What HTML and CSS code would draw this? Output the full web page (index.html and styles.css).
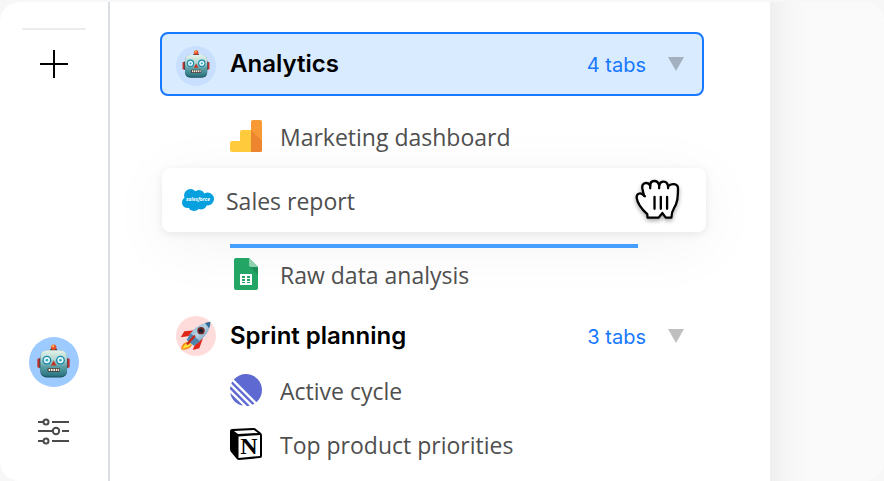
FILE: index.html
```
<!DOCTYPE html>
<html lang="en">
<head>
<meta charset="utf-8">
<title>Analytics</title>
<link rel="stylesheet" href="styles.css">
</head>
<body>
<svg class="defs" aria-hidden="true">
  <defs>
    <linearGradient id="face" x1="0" y1="0" x2="0" y2="1">
      <stop offset="0" stop-color="#e4f3e9"/>
      <stop offset=".35" stop-color="#b2d6d0"/>
      <stop offset=".6" stop-color="#5fa3a8"/>
      <stop offset="1" stop-color="#26717f"/>
    </linearGradient>
    <linearGradient id="hull" x1="0" y1="0" x2="1" y2="1">
      <stop offset="0" stop-color="#5aa0cc"/>
      <stop offset=".5" stop-color="#b9d3e2"/>
      <stop offset="1" stop-color="#3b719c"/>
    </linearGradient>
    <symbol id="robot" viewBox="0 0 97 99">
      <rect x="1" y="42" width="13" height="27" rx="3" fill="#c5302c"/>
      <rect x="83" y="42" width="13" height="27" rx="3" fill="#c5302c"/>
      <rect x="7" y="40" width="5" height="31" rx="2" fill="#2f4c55"/>
      <rect x="85" y="40" width="5" height="31" rx="2" fill="#2f4c55"/>
      <rect x="39" y="13" width="20" height="8" rx="3" fill="#533a34"/>
      <circle cx="49" cy="9" r="8" fill="#e5492b"/>
      <circle cx="47" cy="6" r="4" fill="#ffad48"/>
      <rect x="10" y="19" width="78" height="79" rx="18" fill="#1c505b"/>
      <rect x="10" y="18" width="78" height="77" rx="18" fill="url(#face)"/>
      <circle cx="29" cy="47" r="13" fill="#1687ab"/>
      <circle cx="69" cy="47" r="13" fill="#1687ab"/>
      <circle cx="29" cy="47" r="9" fill="#e9fcff"/>
      <circle cx="69" cy="47" r="9" fill="#e9fcff"/>
      <circle cx="29" cy="47" r="4" fill="#37aacb"/>
      <circle cx="69" cy="47" r="4" fill="#37aacb"/>
      <path d="M49 48 57 63H41Z" fill="#c5301f"/>
      <rect x="31" y="70" width="36" height="11" rx="3" fill="#3d3430"/>
      <path d="M34 75.500H65" stroke="#f7efdc" stroke-width="7" stroke-dasharray="5 2"/>
    </symbol>
  </defs>
</svg>
<div class="window">
  <nav class="sidebar" aria-label="Spaces">
    <div class="divider"></div>
    <button class="icon-button add" aria-label="Add">
      <svg width="28" height="28" viewBox="0 0 28 28"><path d="M14 0V28M0 14H28" stroke="#000" stroke-width="2"/></svg>
    </button>
    <button class="icon-button space" aria-label="Robot space"><svg class="robot-large"><use href="#robot"/></svg></button>
    <button class="icon-button" aria-label="Settings">
      <svg width="32" height="28" viewBox="0 0 32 28" fill="none" stroke="#4b4b4b" stroke-width="2">
        <path d="M0 5H5M14 5H31M0 14H14M24 14H31M0 24H5M14 24H31"/>
        <circle cx="8" cy="5" r="2.500"/><circle cx="18" cy="14" r="3.200"/><circle cx="8" cy="24" r="2.500"/>
      </svg>
    </button>
  </nav>
  <main class="panel">
    <button class="group group-active">
      <span class="badge badge-blue"><svg class="robot-small"><use href="#robot"/></svg></span>
      <span class="group-name">Analytics</span>
      <span class="count">4 tabs</span>
      <svg class="caret" viewBox="0 0 16 14"><path d="M0 0H16L8 14Z"/></svg>
    </button>
    <ul class="tabs">
      <li><a class="tab" href="#marketing">
        <svg class="tab-icon" viewBox="0 0 32 32">
          <path d="M2 21H10V12Q10 10 12 10H21V32H2Q0 32 0 30V23Q0 21 2 21Z" fill="#ffcb3d"/>
          <path d="M23 0H30Q32 0 32 2V30Q32 32 30 32H21V2Q21 0 23 0Z" fill="#f79a36"/>
          <path d="M21 10 32 21V30Q32 32 30 32H21Z" fill="#ec8430"/>
        </svg>
        <span class="tab-name">Marketing dashboard</span></a></li>
      <li><a class="tab dragged" href="#sales">
        <svg class="tab-icon" viewBox="0 0 32 32">
          <g fill="#06a0df"><circle cx="8.500" cy="11.500" r="6.500"/><circle cx="17" cy="11.500" r="5.500"/><circle cx="25.500" cy="15" r="6.500"/><circle cx="5.500" cy="18.500" r="5.500"/><circle cx="12" cy="21" r="6"/><circle cx="19" cy="19.500" r="6"/><rect x="6" y="11" width="17" height="10"/></g>
          <text x="16" y="17" text-anchor="middle" class="cloud-word">salesforce</text>
        </svg>
        <span class="tab-name">Sales report</span>
        <svg class="hand" viewBox="104 56 136 124">
          <path d="M142 173 141 162C132 154 112 134 109 113C108 101 119 94 131 106L126 84C124 68 142 62 150 76C150 58 172 57 177 75C182 59 201 61 204 78C211 70 236 66 234 88C233 104 235 116 228 132C224 143 214 150 214 173H197L187 159 175 173Z" fill="#fff" stroke="#000" stroke-width="7" stroke-linejoin="round"/>
          <path d="M131 106 134 108M150 76V84M177 75V84M204 78V84M163 110V146M182 110V146M201 110V146" fill="none" stroke="#000" stroke-width="7" stroke-linecap="round"/>
        </svg></a>
        <div class="drop-line"></div></li>
      <li><a class="tab" href="#raw">
        <svg class="tab-icon" viewBox="0 0 32 32">
          <path d="M6 0H19L28 9V30Q28 32 26 32H6Q4 32 4 30V2Q4 0 6 0Z" fill="#23a566"/>
          <path d="M19 0 28 9H21Q19 9 19 7Z" fill="#8ed1b1"/><path d="M20 9H28V17Z" fill="#1c8f56"/>
          <path d="M10 16H22V27H10ZM12 18V20H15V18ZM17 18V20H20V18ZM12 21V23H15V21ZM17 21V23H20V21ZM12 24V25H15V24ZM17 24V25H20V24Z" fill="#fff" fill-rule="evenodd"/>
        </svg>
        <span class="tab-name">Raw data analysis</span></a></li>
    </ul>
    <button class="group">
      <span class="badge badge-red">
        <svg width="32" height="30" viewBox="0 0 96 90">
          <path d="M25 62Q4 64 4 86Q27 88 36 72Z" fill="#f58a18"/><path d="M26 66Q11 70 8 83Q25 80 34 71Z" fill="#ffe13b"/>
          <path d="M45 28 13 31 2 49 33 44ZM69 51 58 82 38 87 49 61Z" fill="#df2618"/>
          <path d="M20 57Q40 11 91 2Q94 36 42 74Z" fill="url(#hull)"/>
          <path d="M75 6Q84 3 91 2Q92 12 87 22Z" fill="#356b97"/>
          <path d="M32 37 60 61 42 74 20 57Z" fill="#4d85ad"/>
          <circle cx="63" cy="29" r="11" fill="#702725"/><circle cx="63" cy="29" r="6" fill="#14222f"/>
          <path d="M23 68 43 46" stroke="#c92418" stroke-width="7" stroke-linecap="round"/>
        </svg>
      </span>
      <span class="group-name">Sprint planning</span>
      <span class="count">3 tabs</span>
      <svg class="caret" viewBox="0 0 16 14"><path d="M0 0H16L8 14Z"/></svg>
    </button>
    <ul class="tabs">
      <li><a class="tab" href="#cycle">
        <svg class="tab-icon" viewBox="0 0 100 100" fill="#5e6ad2">
          <path d="M1.225 61.523c-.222-.949.908-1.546 1.597-.857l36.512 36.512c.69.69.092 1.820-.857 1.597-18.425-4.323-32.930-18.827-37.252-37.252ZM.002 46.889a1 1 0 0 0 .290.761L52.350 99.709c.201.200.478.307.761.290 2.370-.149 4.695-.460 6.963-.927.765-.157 1.030-1.096.478-1.648L2.576 39.448c-.552-.551-1.491-.286-1.648.479a50 50 0 0 0-.926 6.962ZM4.210 29.705a.990.990 0 0 0 .208 1.100l64.776 64.776c.289.290.726.375 1.100.208a50 50 0 0 0 5.185-2.684.980.980 0 0 0 .183-1.540L8.436 24.336a.980.980 0 0 0-1.541.183 50 50 0 0 0-2.684 5.185ZM12.657 18.074a.990.990 0 0 1-.037-1.356C21.795 6.459 35.129 0 49.952 0 77.592 0 100 22.407 100 50.048c0 14.823-6.459 28.157-16.718 37.332a.990.990 0 0 1-1.356-.037Z"/>
        </svg>
        <span class="tab-name">Active cycle</span></a></li>
      <li><a class="tab" href="#priorities">
        <svg class="tab-icon" viewBox="0 0 32 32">
          <path d="M2 1 23 0Q25 0 26 1L31 5Q32 6 32 8V28Q32 30 30 30L9 32Q7 32 6 30L1 24Q0 23 0 21V3Q0 1 2 1Z"/>
          <path d="M4 3 8 6 28 5 24 2ZM8.500 8.500 30 7V28L8.500 30Z" fill="#fff"/>
          <text x="19" y="26" text-anchor="middle" class="notion-letter">N</text>
        </svg>
        <span class="tab-name">Top product priorities</span></a></li>
    </ul>
  </main>
  <div class="page-edge"></div>
</div>
</body>
</html>
```
FILE: styles.css
```
* { box-sizing: border-box; }
body { margin: 0; background: #f7f7f7; font-family: Inter, "Liberation Sans", sans-serif; }
button { border: 0; background: none; font: inherit; color: inherit; padding: 0; }
svg { display: block; flex-shrink: 0; }
.defs { position: absolute; width: 0; height: 0; }

.window {
  display: flex;
  min-height: calc(100vh - 2px);
  margin-top: 2px;
  background: #fff;
  border-radius: 20px;
  overflow: hidden;
}

.sidebar {
  display: flex;
  flex-direction: column;
  align-items: center;
  width: 110px;
  padding: 26px 1px 36px 0;
  border-right: 2px solid #d9dee4;
}
.divider { width: 64px; height: 2px; border-radius: 1px; background: #ececec; }
.icon-button { display: flex; align-items: center; justify-content: center; }
.add { margin: 20px 0 auto; }
.space { width: 50px; height: 50px; margin-bottom: 30px; padding-bottom: 2px; border-radius: 50%; background: #9dcaff; }
.robot-large { width: 33px; height: 34px; }

.panel { flex: 1; padding: 30px 66px 10px 50px; }

.group {
  display: flex;
  align-items: center;
  width: 100%;
  height: 56px;
  margin: 10px 0 2px;
  padding: 0 20px 0 16px;
  text-align: left;
}
.group-active {
  height: 64px;
  margin: 0 0 16px;
  padding: 0 18px 0 14px;
  border: 2px solid #1677ff;
  border-radius: 8px;
  background: #d9ebff;
}
.badge {
  display: flex;
  align-items: center;
  justify-content: center;
  width: 40px;
  height: 40px;
  margin-right: 14px;
  border-radius: 50%;
}
.group-active .badge { margin-top: 4px; }
.badge-blue { background: #c9dfff; padding-bottom: 4px; }
.badge-red { background: #ffdcdc; }
.robot-small { width: 28px; height: 28px; }
.group-name { flex: 1; font-size: 24px; line-height: 32px; font-weight: 600; color: #000; }
.count { margin-right: 22px; padding-top: 2px; font-size: 20px; line-height: 24px; color: #1677ff; }
.caret { width: 16px; height: 14px; fill: rgba(0, 0, 0, .25); }

.tabs { list-style: none; margin: 0; padding: 0; }
.tab {
  display: flex;
  align-items: center;
  gap: 18px;
  height: 48px;
  padding-left: 70px;
  font-family: "Open Sans", sans-serif;
  font-size: 23px;
  color: #4f4f4f;
  text-decoration: none;
}
.tab-icon { width: 32px; height: 32px; }
.tab-name { padding-top: 2px; }
.tabs li + li { margin-top: 6px; }
.tabs li:has(.dragged) { margin-top: 8px; }
.tabs li:has(.dragged) + li { margin-top: 2px; }
.dragged {
  gap: 12px;
  height: 64px;
  margin: 0 -2px 0 2px;
  padding: 0 26px 0 20px;
  border-radius: 8px;
  background: #fff;
  box-shadow: 0 2px 8px rgba(0, 0, 0, .08), 0 12px 64px rgba(0, 0, 0, .05);
}
.hand { width: 45px; height: 41px; margin-left: auto; margin-bottom: 2px; overflow: visible; filter: drop-shadow(0 2px 2px rgba(0, 0, 0, .35)); }
.drop-line { height: 4px; margin: 12px 66px 0 70px; background: #469eff; }
.cloud-word { font: italic 700 5px "Open Sans", sans-serif; fill: #fff; }
.notion-letter { font: 700 24px "Liberation Serif", serif; }

.page-edge { width: 114px; background: linear-gradient(to right, #efefef, #f7f7f7 20px, #fafafa 40px); }
```
